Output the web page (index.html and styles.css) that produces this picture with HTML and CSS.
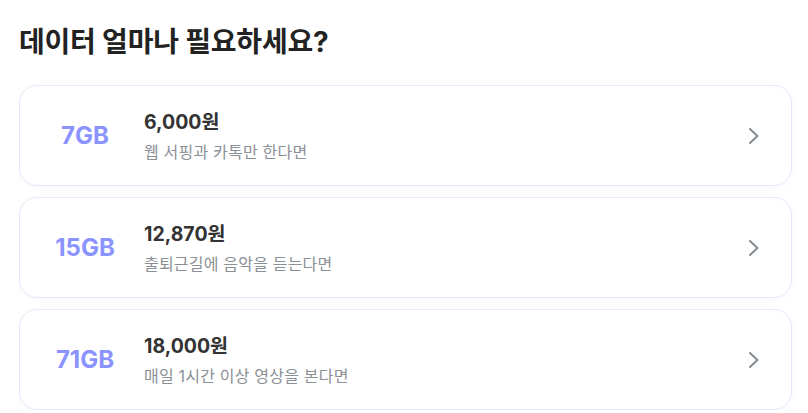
FILE: index.html
```html
<!DOCTYPE html>
<html lang="ko">
<head>
<meta charset="utf-8">
<link rel="stylesheet" href="styles.css">
</head>
<body>
<main class="page">
  <h1 class="title">데이터 얼마나 필요하세요?</h1>
  <ul class="plans">
    <li class="plan">
      <div class="gb">7GB</div>
      <div class="info">
        <div class="price">6,000원</div>
        <div class="desc">웹 서핑과 카톡만 한다면</div>
      </div>
      <svg class="chev" width="12" height="18" viewBox="0 0 12 18"><path d="M2 2 L9.5 9 L2 16" fill="none" stroke="#858b94" stroke-width="2" stroke-linecap="round" stroke-linejoin="round"/></svg>
    </li>
    <li class="plan">
      <div class="gb">15GB</div>
      <div class="info">
        <div class="price">12,870원</div>
        <div class="desc">출퇴근길에 음악을 듣는다면</div>
      </div>
      <svg class="chev" width="12" height="18" viewBox="0 0 12 18"><path d="M2 2 L9.5 9 L2 16" fill="none" stroke="#858b94" stroke-width="2" stroke-linecap="round" stroke-linejoin="round"/></svg>
    </li>
    <li class="plan">
      <div class="gb">71GB</div>
      <div class="info">
        <div class="price">18,000원</div>
        <div class="desc">매일 1시간 이상 영상을 본다면</div>
      </div>
      <svg class="chev" width="12" height="18" viewBox="0 0 12 18"><path d="M2 2 L9.5 9 L2 16" fill="none" stroke="#858b94" stroke-width="2" stroke-linecap="round" stroke-linejoin="round"/></svg>
    </li>
  </ul>
</main>
</body>
</html>
```

FILE: styles.css
```css
* { box-sizing: border-box; }
html, body { margin: 0; padding: 0; background: #fff; }
body {
  font-family: Inter, "Noto Sans CJK KR", sans-serif;
  color: #333d4b;
}
.page {
  padding: 23px 16px 0 19px;
}
.title {
  margin: 0 0 24px 0;
  font-size: 28px;
  line-height: 38px;
  font-weight: 700;
  color: #222;
  letter-spacing: -0.2px;
}
.plans {
  list-style: none;
  margin: 0;
  padding: 0;
  display: flex;
  flex-direction: column;
  gap: 11px;
}
.plan {
  height: 101px;
  border: 1px solid #e4e7fb;
  border-radius: 18px;
  box-shadow: 0 1px 6px rgba(120, 130, 200, 0.06);
  display: flex;
  align-items: center;
  padding: 0 31px 0 20px;
}
.gb {
  width: 90px;
  text-align: center;
  font-size: 24px;
  font-weight: 700;
  color: #8b93ff;
  letter-spacing: 0;
}
.info {
  flex: 1;
  margin-left: 14px;
  display: flex;
  flex-direction: column;
  gap: 7px;
  padding-top: 2px;
}
.price {
  font-size: 19.5px;
  line-height: 24px;
  font-weight: 700;
  color: #333;
}
.desc {
  font-size: 16px;
  line-height: 22px;
  color: #8b8f96;
  letter-spacing: 0.2px;
}
.chev { display: block; }
```
